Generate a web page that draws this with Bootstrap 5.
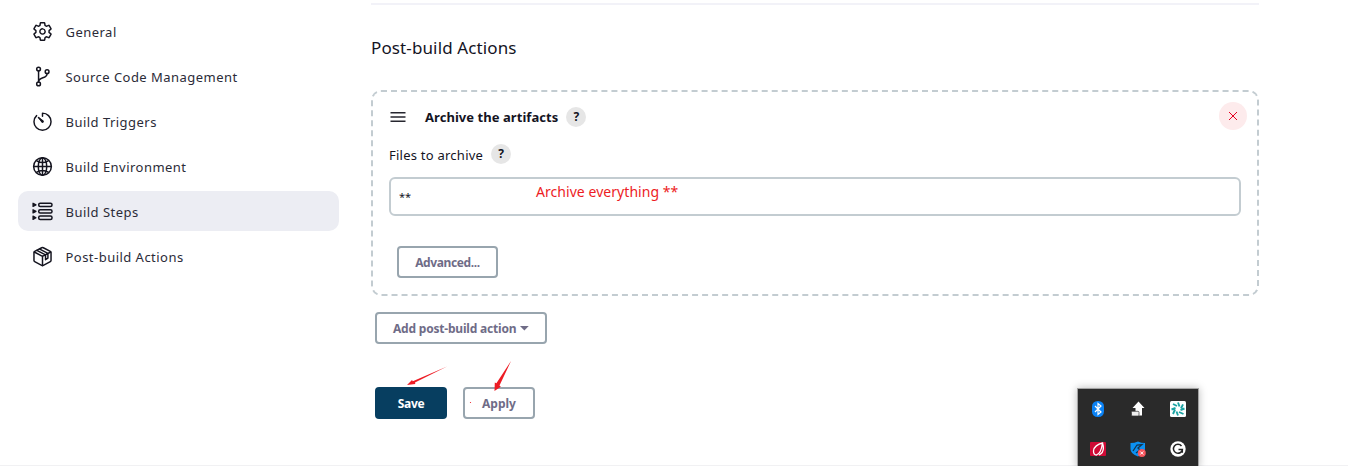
<!DOCTYPE html>
<html lang="en">
<head>
<meta charset="utf-8">
<meta name="viewport" content="width=device-width, initial-scale=1">
<title>Post-build Actions</title>
<link href="https://cdn.jsdelivr.net/npm/bootstrap@5.3.0/dist/css/bootstrap.min.css" rel="stylesheet">
<style>
body{font-family:"Noto Sans","Open Sans",sans-serif;color:#14141f;background:#fff;height:466px;overflow:hidden;font-size:13px;line-height:20px}
.page{height:466px}
.page::after{content:"";position:absolute;left:0;right:0;bottom:0;height:1px;background:#f1f1f3}
.side{width:339px;padding:11px 0 0 18px;gap:5px}
.side .nav-link{height:40px;padding:0 0 0 13.5px;border-radius:10px;color:#2b2b38;font-size:13px;letter-spacing:.47px;gap:13px}
.side .nav-link.active{background:#ecedf3;color:#2b2b38}
.side svg{width:21px;height:21px;color:#14141f}
.side .nav-link span{margin-top:2px}
.main{width:888px;margin-left:32px;padding-top:3px}
.rule{height:2px;background:#f2f2f8}
.title{font-size:17px;font-weight:400;line-height:24px;margin:31px 0 30px;letter-spacing:.12px}
.chunk{height:206px;border:2px dashed #c3ccd1;border-radius:10px;padding:10px 16px 0}
.help{width:20px;height:20px;border-radius:50%;background:#e6e6e6;font-weight:700;font-size:12px;line-height:20px;text-align:center}
.chunk-head{height:30px}
.chunk-head b{margin-left:19px;margin-right:8px;font-size:13px;letter-spacing:.05px}
.remove{width:28px;height:28px;border-radius:50%;background:#fdebec;margin:-2px -6px 0 0}
.field-label{margin-top:12px;height:20px}
.files{letter-spacing:.24px;margin-top:2px}
.field{height:39px;border:2px solid #c3ccd1;border-radius:6px;font-size:11px;padding:0 8px 1px;color:#14141f;margin-top:13px}
.outline{height:32px;padding:0 16px;border:2px solid #98a5ae;border-radius:4px;color:#6f6c87;font-weight:700;font-size:12px;line-height:29px;white-space:nowrap;letter-spacing:-.2px}
.advanced{width:101px;margin-top:30px;letter-spacing:-.38px}
.add{width:172px;margin-top:16px}
.actions{margin-top:43px}
.apply{width:72px;letter-spacing:0}
.save{width:72px;height:32px;padding:0;border:0;border-radius:4px;background:#073e60;color:#fff;font-weight:700;font-size:12px;line-height:33px;letter-spacing:-.3px}
.note{left:536px;top:181px;color:#ed1c24;font-size:14px;line-height:22px;white-space:nowrap;letter-spacing:.05px}
.marks{left:0;top:0;pointer-events:none}
.tray{left:1077px;top:388px;width:122px;height:80px;background:#2a2a2a;border:1px solid #a3a3a3;border-bottom:0;box-shadow:0 0 8px #0004;z-index:1}
.tray .cell{width:40px;height:40px}
</style>
</head>
<body>
<div class="page d-flex position-relative overflow-hidden">
<nav class="side nav flex-column flex-nowrap flex-shrink-0">
<a class="nav-link d-flex align-items-center" href="#"><svg viewBox="0 0 512 512" fill="none" stroke="currentColor" stroke-width="36" stroke-linecap="round" stroke-linejoin="round"><path d="M262.3 192a64 64 0 1 0 57.8 57.7A64.4 64.4 0 0 0 262.3 192zM416.4 256a154 154 0 0 1-1.5 20.8l45.2 35.5a10.8 10.8 0 0 1 2.5 13.7l-42.8 74a10.8 10.8 0 0 1-13.1 4.6l-44.9-18.1a16.1 16.1 0 0 0-15.2 1.7A165 165 0 0 1 325 400.8a15.900 15.900 0 0 0-8.800 12.100l-6.700 47.900A11.100 11.100 0 0 1 298.800 470h-85.600a11.100 11.100 0 0 1-10.700-8.900l-6.700-47.800a16.100 16.100 0 0 0-9-12.200 155 155 0 0 1-21.500-12.500 16 16 0 0 0-15.100-1.700l-44.900 18.100a10.800 10.800 0 0 1-13.100-4.600l-42.800-74a10.800 10.800 0 0 1 2.500-13.700l38.200-30a16 16 0 0 0 6-14.100 160 160 0 0 1 0-25 16 16 0 0 0-6.100-13.900l-38.200-30a10.800 10.800 0 0 1-2.400-13.700l42.800-74a10.800 10.800 0 0 1 13.100-4.600l44.900 18.100a16.100 16.100 0 0 0 15.200-1.700A165 165 0 0 1 187 111.200a15.900 15.900 0 0 0 8.800-12.100l6.700-47.900A11.100 11.100 0 0 1 213.200 42h85.600a11.100 11.100 0 0 1 10.700 8.900l6.700 47.800a16.100 16.100 0 0 0 9 12.200 155 155 0 0 1 21.500 12.500 16 16 0 0 0 15.100 1.700l44.900-18.100a10.800 10.800 0 0 1 13.100 4.600l42.800 74a10.800 10.800 0 0 1-2.500 13.700l-38.200 30a16 16 0 0 0-6.100 14.100c.400 4.200.600 8.400.600 12.600z"/></svg><span>General</span></a>
<a class="nav-link d-flex align-items-center" href="#"><svg viewBox="0 0 512 512" fill="none" stroke="currentColor" stroke-width="36" stroke-linecap="round" stroke-linejoin="round"><circle cx="160" cy="74" r="46"/><circle cx="160" cy="438" r="46"/><circle cx="368" cy="138" r="46"/><path d="M160 120v270M368 186c0 128-208 76-208 202"/></svg><span>Source Code Management</span></a>
<a class="nav-link d-flex align-items-center" href="#"><svg viewBox="0 0 512 512" fill="none" stroke="currentColor" stroke-width="36" stroke-linecap="round" stroke-linejoin="round"><path d="M112.900 113A204 204 0 0 0 48 260c0 114.700 93.300 208 208 208s208-93.300 208-208S370.700 52 256 52v76"/><path fill="currentColor" stroke="none" d="M233.400 278.600l-86-122a7 7 0 0 1 9.800-9.800l122 86a32 32 0 1 1-45.800 45.800z"/><path d="M158 160l98 96"/></svg><span>Build Triggers</span></a>
<a class="nav-link d-flex align-items-center" href="#"><svg viewBox="0 0 512 512" fill="none" stroke="currentColor" stroke-width="36" stroke-linecap="round"><circle cx="256" cy="256" r="216"/><ellipse cx="256" cy="256" rx="103" ry="216"/><path d="M256 40v432M40 256h432M117 117c38 27 87 43 139 43s101-16 139-43M117 395c38-27 87-43 139-43s101 16 139 43"/></svg><span>Build Environment</span></a>
<a class="nav-link active d-flex align-items-center" href="#"><svg viewBox="0 0 21 21" fill="none" stroke="currentColor" stroke-width="1.500" stroke-linejoin="round"><rect x="6.700" y="2.200" width="13.300" height="3.300" rx="1.500"/><rect x="6.700" y="8.700" width="13.300" height="3.300" rx="1.500"/><rect x="6.700" y="15.100" width="13.300" height="3.300" rx="1.500"/><path fill="currentColor" stroke-width="1.200" d="M1 2.200v3.300l3-1.650zM1 8.700V12l3-1.650zM1 15.100v3.300l3-1.650z"/></svg><span>Build Steps</span></a>
<a class="nav-link d-flex align-items-center" href="#"><svg viewBox="0 0 512 512" fill="none" stroke="currentColor" stroke-width="36" stroke-linecap="round" stroke-linejoin="round"><path d="M464 352V160a32 32 0 0 0-17-28L276 42a44 44 0 0 0-40 0L65 132a32 32 0 0 0-17 28v192a32 32 0 0 0 17 28l171 94a44 44 0 0 0 40 0l171-94a32 32 0 0 0 17-28z"/><path d="M56 146l200 106 200-106M256 476V252M118 108l212 110v116l58-36V182L190 74"/></svg><span>Post-build Actions</span></a>
</nav>
<main class="main flex-shrink-0">
<div class="rule"></div>
<h1 class="title">Post-build Actions</h1>
<section class="chunk">
<div class="chunk-head d-flex align-items-center">
<svg class="drag" width="17" height="12" viewBox="0 0 17 12" stroke="#26262f" stroke-width="1.600"><path d="M1.500 1.800h15M1.500 6h15M1.500 10.200h15"/></svg>
<b>Archive the artifacts</b><span class="help">?</span>
<button class="remove btn border-0 p-0 ms-auto d-flex align-items-center justify-content-center" aria-label="Remove"><svg width="10" height="10" viewBox="0 0 10 10" stroke="#e6001f" stroke-width="1"><path d="M1 1l8 8M9 1l-8 8"/></svg></button>
</div>
<div class="field-label d-flex align-items-center"><label for="files" class="files">Files to archive</label><span class="help ms-2">?</span></div>
<input id="files" class="field form-control" value="**">
<button class="outline btn ms-2 advanced">Advanced...</button>
</section>
<button class="outline btn d-flex align-items-center ms-1 add">Add post-build action<svg class="ms-1" width="9" height="5" viewBox="0 0 9 5" fill="#6f6c87"><path d="M0 0h9L4.500 4.500z"/></svg></button>
<div class="d-flex gap-3 ms-1 actions"><button class="save btn">Save</button><button class="outline btn apply">Apply</button></div>
</main>
<div class="note position-absolute">Archive everything **</div>
<svg class="marks position-absolute" width="600" height="466" fill="#ed1c24"><path d="M447 366.500L415 382.500l.3 1.600-8.300.9 5-5 .8 1.200zM511 361L499.500 385.500l1.300 1.200-6.300 4.300.3-8.500 1.600.7z"/><circle cx="470.500" cy="402.500" r=".6"/></svg>
<div class="tray position-absolute d-flex flex-wrap">
<div class="cell d-flex align-items-center justify-content-center"><svg width="16" height="16"><rect x="2" width="12" height="16" rx="5.500" fill="#0a82f5"/><path d="M5 5l6 6-3 2.500v-11L11 5l-6 6" fill="none" stroke="#fff" stroke-width="1.200"/></svg></div>
<div class="cell d-flex align-items-center justify-content-center"><svg width="16" height="16" fill="#fff"><path d="M8.500.5l6 6.500h-2.500V14.500H5.500V7H2.500z"/><rect x="1.500" y="10.300" width="7.500" height="4.700" rx="1" fill="#eee" stroke="#333" stroke-width=".7"/></svg></div>
<div class="cell d-flex align-items-center justify-content-center"><svg width="16" height="16"><rect width="16" height="16" rx="1.500" fill="#fff"/><g stroke="#1ba3a3" stroke-width="1.900"><path d="M9.500 5.500L8 1.500M11 7.500l2-4.200M10.500 9L14.500 7.500M9 11l4.500 2M6.500 10.500L8 14.500M5 8.500L3 13M5.500 7L1.500 8.500M7 5L3 3"/></g></svg></div>
<div class="cell d-flex align-items-center justify-content-center"><svg width="16" height="16"><rect y="1" width="16" height="14" rx="1" fill="#cf0a35"/><path d="M12.500 2C8 3 3.500 6 3.500 10c0 2.500 1.500 4 3 4 3-1 5-5 6-12zM12.500 2c1.500 5 1 10-3.500 12" fill="none" stroke="#fff" stroke-width="1.300"/></svg></div>
<div class="cell d-flex align-items-center justify-content-center"><svg width="16" height="16"><path d="M.5 2q4 0 7.500-1.500Q11 2 15 2v6q0 5-7 7.500Q.5 13 .5 8z" fill="#0b91f2"/><path d="M3 10l4-6 5-.5L8 7l2 2-4 3" fill="none" stroke="#15344d" stroke-width="1.300"/><circle cx="11.800" cy="12" r="4" fill="#f5555d"/><path d="M10.300 10.500l3 3M13.300 10.500l-3 3" stroke="#fff"/></svg></div>
<div class="cell d-flex align-items-center justify-content-center"><svg width="16" height="16"><circle cx="8" cy="8" r="7.700" fill="#fff"/><path d="M11.500 5A4.500 4.500 0 1 0 12.400 8.500H8.500M12.300 8.500v3.300" fill="none" stroke="#222" stroke-width="1.500"/></svg></div>
</div>
</div>
<script src="https://cdn.jsdelivr.net/npm/bootstrap@5.3.0/dist/js/bootstrap.bundle.min.js"></script>
</body>
</html>
